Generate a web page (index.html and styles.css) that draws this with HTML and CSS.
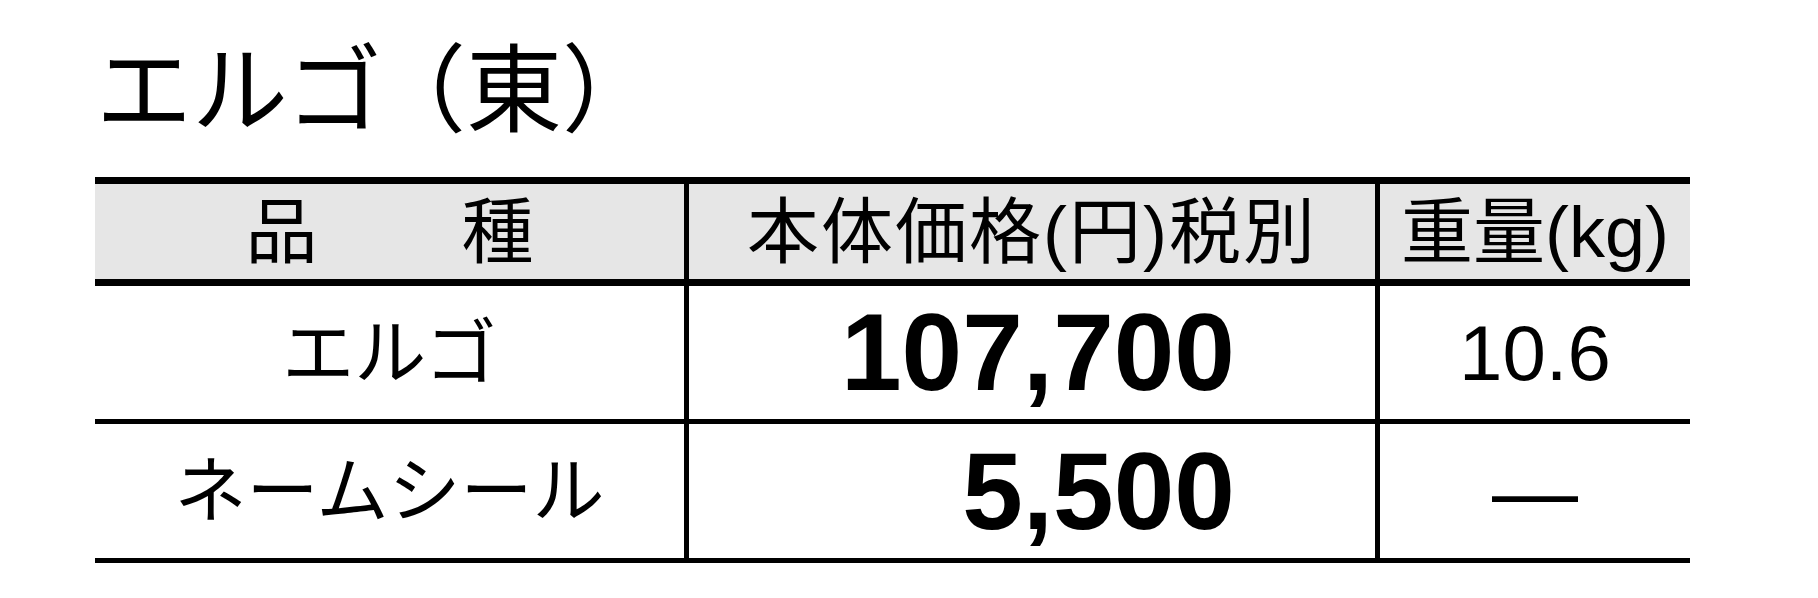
FILE: index.html
```html
<!DOCTYPE html>
<html lang="ja">
<head>
<meta charset="utf-8">
<title>エルゴ（東）</title>
<link rel="stylesheet" href="styles.css">
</head>
<body>
<div class="page">
  <h1 class="title">エルゴ<span class="paren">（東）</span></h1>
  <div class="price-table">
    <div class="row head">
      <div class="cell c1">品　　種</div>
      <div class="cell c2 center">本体価格(円)税別</div>
      <div class="cell c3">重量(kg)</div>
    </div>
    <div class="row body r1">
      <div class="cell c1 jp">エルゴ</div>
      <div class="cell c2 price">107,700</div>
      <div class="cell c3 weight">10.6</div>
    </div>
    <div class="row body r2">
      <div class="cell c1 jp">ネームシール</div>
      <div class="cell c2 price">5,500</div>
      <div class="cell c3 weight dash">—</div>
    </div>
  </div>
</div>
</body>
</html>
```

FILE: styles.css
```css
html, body {
  margin: 0;
  padding: 0;
  background: #ffffff;
}

body {
  font-family: "Liberation Sans", "Noto Sans CJK JP", sans-serif;
  color: #000000;
}

.page {
  padding-left: 95px;
  width: 1595px;
}

.title {
  margin: 0;
  height: 177px;
  box-sizing: border-box;
  padding-top: 35px;
  padding-left: 1px;
  font-family: "Noto Sans CJK JP", sans-serif;
  font-weight: 400;
  font-size: 96px;
  line-height: 1;
}

.paren {
  margin-left: -12px;
}

.price-table {
  width: 1595px;
  border-top: 7px solid #000;
}

.row {
  display: grid;
  grid-template-columns: 589px 691px 315px;
}

.head {
  height: 102px;
  box-sizing: border-box;
  background: #e6e6e6;
  border-bottom: 7px solid #000;
}

.r1 {
  height: 138px;
  box-sizing: border-box;
  border-bottom: 5px solid #000;
}

.r2 {
  height: 139px;
  box-sizing: border-box;
  border-bottom: 5px solid #000;
}

.cell {
  display: flex;
  align-items: center;
  justify-content: center;
  box-sizing: border-box;
  line-height: 1;
  white-space: nowrap;
}

.c2, .c3 {
  border-left: 5px solid #000;
}

.head .cell {
  font-size: 72px;
}

.head .c2 {
  letter-spacing: 2px;
}

.jp {
  font-size: 72px;
}

.price {
  justify-content: flex-end;
  padding-right: 140px;
  font-size: 109px;
  font-weight: 700;
}

.weight {
  font-size: 78px;
}

.dash {
  font-size: 86px;
}
```
